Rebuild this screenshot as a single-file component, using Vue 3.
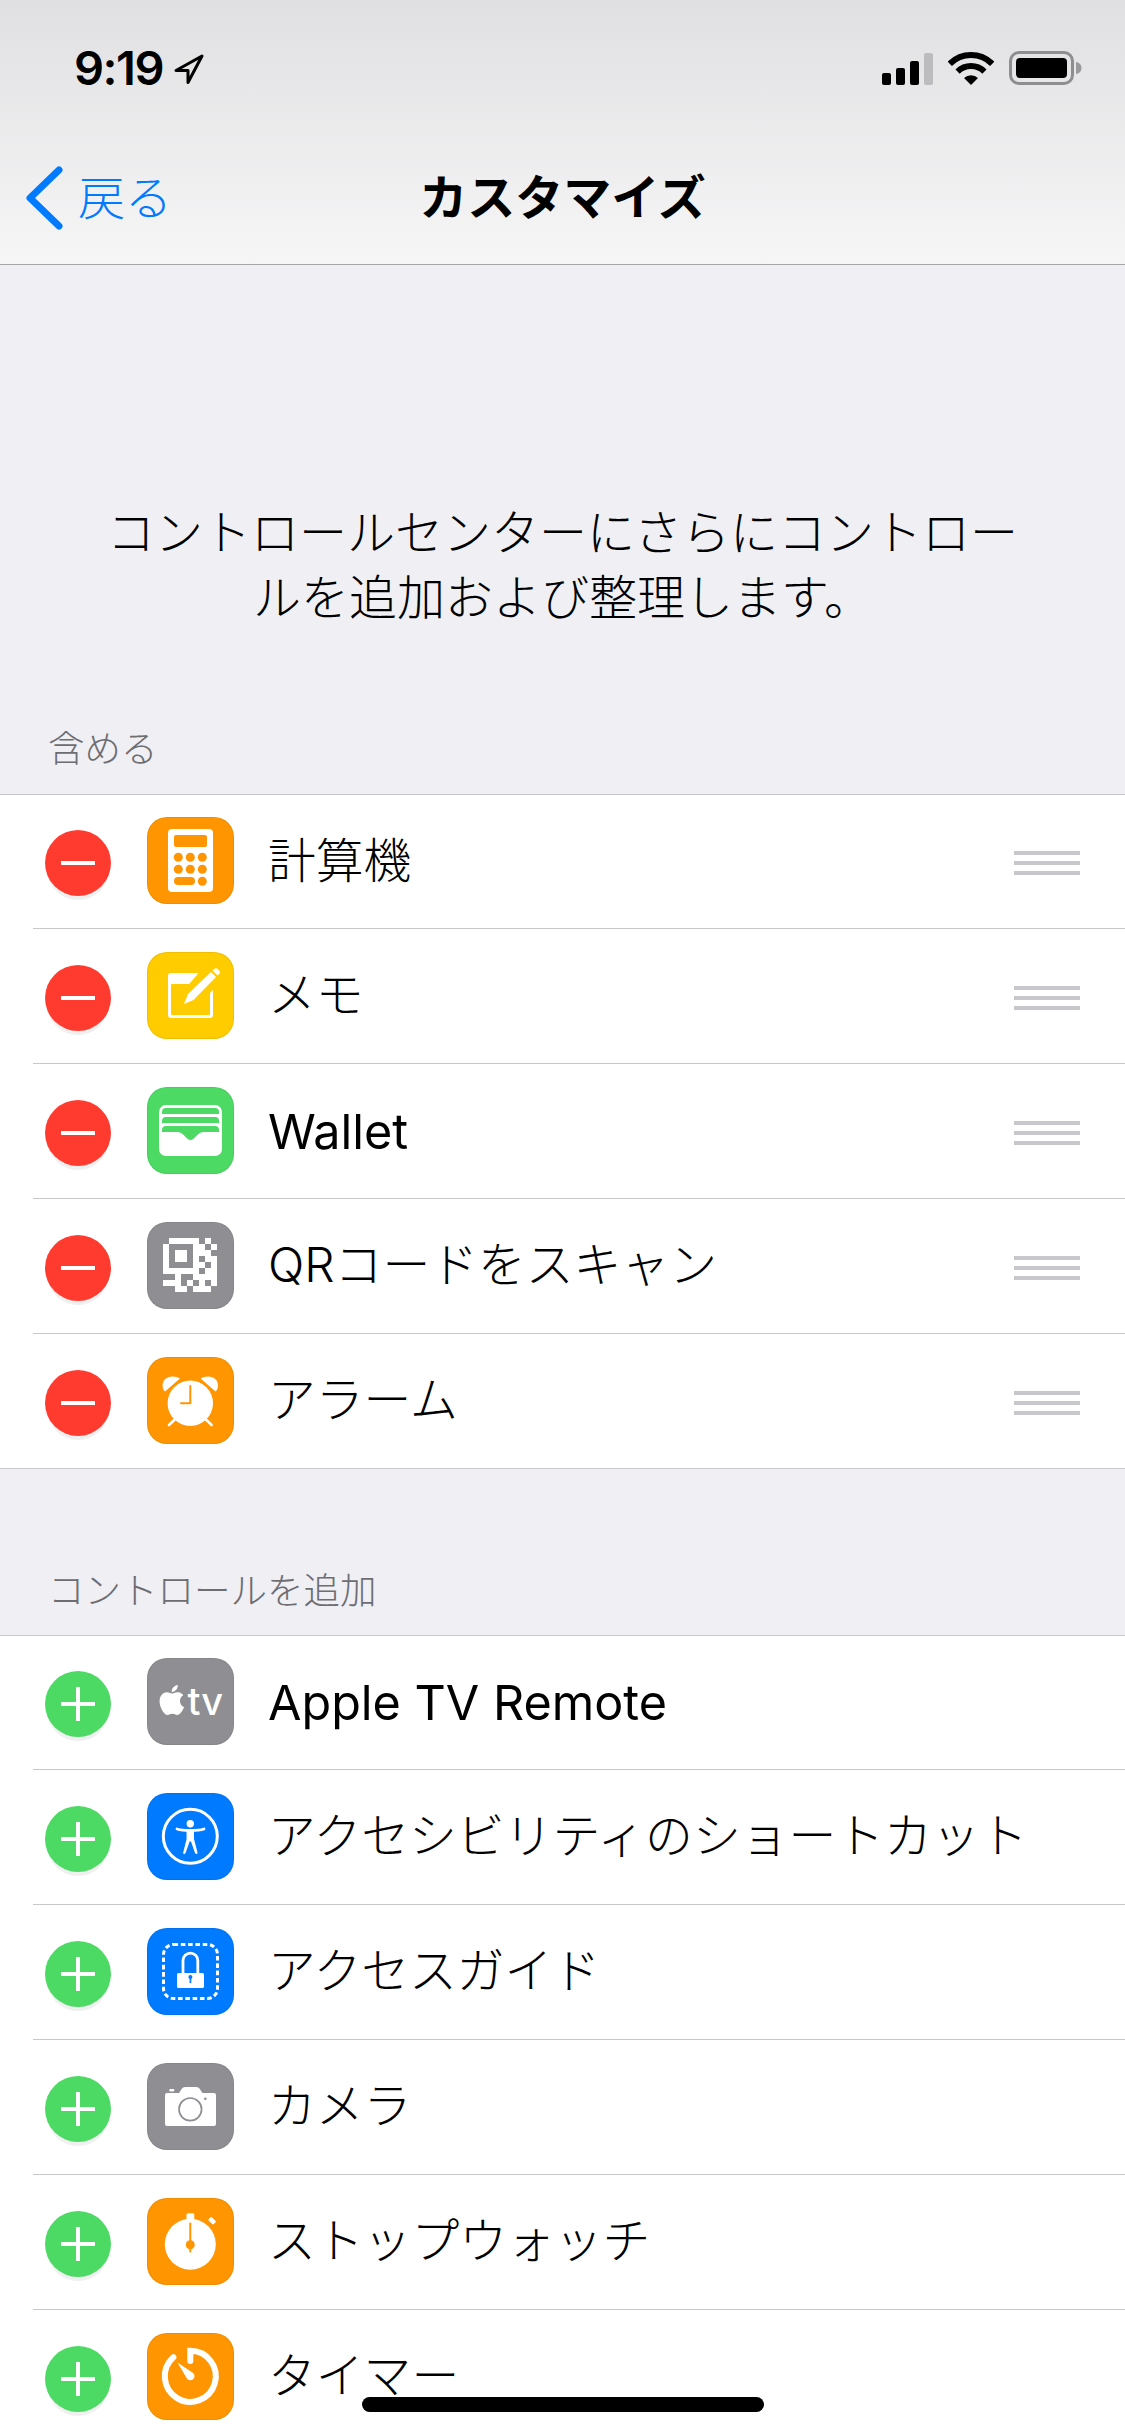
<template>
  <div class="screen">
    <header class="top-bar">
      <div class="status-bar">
        <div class="status-left">
          <span class="time">9:19</span>
          <svg class="location" width="32" height="32" viewBox="0 0 32 32">
            <path d="M29 3 L3 17.5 H15 V29.5 Z" fill="none" stroke="#000" stroke-width="3" stroke-linejoin="round" />
          </svg>
        </div>
        <div class="status-right">
          <svg width="51" height="32" viewBox="0 0 51 32">
            <rect x="0" y="20" width="9" height="12" rx="2" fill="#000" />
            <rect x="14" y="15" width="9" height="17" rx="2" fill="#000" />
            <rect x="28" y="8" width="9" height="24" rx="2" fill="#000" />
            <rect x="42" y="0" width="9" height="32" rx="2" fill="#bcbcbe" />
          </svg>
          <svg width="46" height="33" viewBox="0 0 46 33">
            <path d="M1.8 11.8 A30 30 0 0 1 44.2 11.8" fill="none" stroke="#000" stroke-width="6" />
            <path d="M9.6 19.6 A19 19 0 0 1 36.4 19.6" fill="none" stroke="#000" stroke-width="6" />
            <path d="M23 33 L16 26 A10 10 0 0 1 30 26 Z" fill="#000" />
          </svg>
          <svg width="74" height="34" viewBox="0 0 74 34">
            <rect x="1.5" y="1.5" width="62" height="31" rx="8.5" fill="none" stroke="#8e8e90" stroke-width="3" />
            <rect x="7" y="7" width="51" height="20" rx="4" fill="#000" />
            <path d="M67 11 C70.5 11.5 72.5 14 72.5 17 C72.5 20 70.5 22.5 67 23 Z" fill="#9a9a9c" />
          </svg>
        </div>
      </div>
      <nav class="nav-bar">
        <div class="back">
          <svg width="40" height="66" viewBox="0 0 40 66">
            <polyline points="33,5 4,33 33,61" fill="none" stroke="#007aff" stroke-width="7" stroke-linecap="round" stroke-linejoin="round" />
          </svg>
          <span class="back-text">戻る</span>
        </div>
        <div class="title">カスタマイズ</div>
        <div></div>
      </nav>
    </header>

    <p class="intro">コントロールセンターにさらにコントロールを追加および整理します。</p>

    <section v-for="section in sections" :key="section.title" class="section">
      <h2 class="section-title">{{ section.title }}</h2>
      <ul class="list">
        <li v-for="item in section.items" :key="item.label" class="row">
          <svg class="toggle" :class="section.add ? 'toggle-add' : 'toggle-remove'" width="66" height="66" viewBox="0 0 66 66">
            <rect x="16" y="31" width="34" height="4" fill="#fff" />
            <rect v-if="section.add" x="31" y="16" width="4" height="34" fill="#fff" />
          </svg>

          <div class="app-icon" :class="item.color">
            <svg width="87" height="87" viewBox="0 0 87 87">
              <g v-if="item.icon === 'calc'">
                <rect x="21" y="12" width="45" height="63" rx="4" fill="#fff" />
                <rect x="27" y="18" width="33" height="12" rx="2" fill="#ff9500" />
                <g fill="#ff9500">
                  <circle v-for="dot in calcDots" :key="dot[0] + '-' + dot[1]" :cx="dot[0]" :cy="dot[1]" r="4.5" />
                  <rect x="27" y="60" width="21" height="8" rx="4" />
                </g>
              </g>

              <g v-else-if="item.icon === 'memo'">
                <rect x="21" y="21" width="45" height="45" rx="3" fill="#fff" />
                <rect x="24" y="32" width="39" height="31" rx="1" fill="#ffcc00" />
                <path d="M56 16 L72 16 L72 32 L44 60 L30 60 L30 46 Z" fill="#ffcc00" />
                <path d="M37 52 L41 42 L64 20 L69 25 L46.5 48 Z" fill="#fff" />
                <path d="M65.5 18.5 L67.5 16.7 Q69 15.7 70.3 16.8 L72.5 19 Q73.5 20.4 72.4 21.7 L70.5 23.6 Z" fill="#fff" />
              </g>

              <g v-else-if="item.icon === 'wallet'">
                <rect x="12" y="18" width="63" height="51" rx="7" fill="#fff" />
                <g fill="#4cd964">
                  <path d="M15 27 V25 a4 4 0 0 1 4 -4 H68 a4 4 0 0 1 4 4 V27 Z" />
                  <path d="M15 36 V34 a4 4 0 0 1 4 -4 H68 a4 4 0 0 1 4 4 V36 Z" />
                  <path d="M15 45 V43 a4 4 0 0 1 4 -4 H68 a4 4 0 0 1 4 4 V45 H57 C50 45 48 53 43.5 53 C39 53 37 45 30 45 Z" />
                </g>
              </g>

              <g v-else-if="item.icon === 'qr'" fill="#fff" shape-rendering="crispEdges">
                <rect v-for="cell in qrCells" :key="cell.x + '-' + cell.y" :x="cell.x" :y="cell.y" width="6.1" height="6.1" />
              </g>

              <g v-else-if="item.icon === 'alarm'">
                <circle cx="43.3" cy="46.3" r="22.7" fill="#fff" />
                <path d="M43.3 29 V46.3 H34" fill="none" stroke="#ff9500" stroke-width="2" stroke-linecap="round" stroke-linejoin="round" />
                <path d="M33 21.5 L18 34.5 C15 32 15 27 17 23.5 C20 19 28 18 33 21.5 Z" fill="#fff" />
                <path d="M53.6 21.5 L68.6 34.5 C71.6 32 71.6 27 69.6 23.5 C66.6 19 58.6 18 53.6 21.5 Z" fill="#fff" />
                <path d="M22 68 L28 62.3 M64.6 68 L58.6 62.3" stroke="#fff" stroke-width="2.6" stroke-linecap="round" />
              </g>

              <g v-else-if="item.icon === 'tv'" fill="#fff">
                <path transform="translate(9.8 27) scale(1.25)" d="M12.152 6.896c-.948 0-2.415-1.078-3.96-1.04-2.04.027-3.91 1.183-4.961 3.014-2.117 3.675-.546 9.103 1.519 12.09 1.013 1.454 2.208 3.09 3.792 3.039 1.52-.065 2.09-.987 3.935-.987 1.831 0 2.35.987 3.96.948 1.637-.026 2.676-1.48 3.676-2.948 1.156-1.688 1.636-3.325 1.662-3.415-.039-.013-3.182-1.221-3.22-4.857-.026-3.04 2.48-4.494 2.597-4.559-1.429-2.09-3.623-2.324-4.39-2.376-2-.156-3.675 1.09-4.61 1.09zM15.53 3.83c.843-1.012 1.4-2.427 1.245-3.83-1.207.052-2.662.805-3.532 1.818-.78.896-1.454 2.338-1.273 3.714 1.338.104 2.715-.688 3.559-1.701" />
                <text x="40.5" y="57" font-family="Inter, sans-serif" font-size="38" font-weight="500">tv</text>
              </g>

              <g v-else-if="item.icon === 'access'">
                <circle cx="43.3" cy="43.3" r="27" fill="none" stroke="#fff" stroke-width="3" />
                <circle cx="43.3" cy="30.7" r="3.7" fill="#fff" />
                <path d="M30 36 C36 38 51 38 57 36" fill="none" stroke="#fff" stroke-width="2.8" stroke-linecap="round" />
                <path d="M39.5 37.5 L47 37.5 L47 46 L50.5 59.5 C50.5 61.5 48.5 61.5 48 60 L44 48.5 H42.6 L38.6 60 C38 61.5 36 61.5 36.2 59.5 L39.6 46 Z" fill="#fff" />
              </g>

              <g v-else-if="item.icon === 'guided'">
                <rect x="16.5" y="16.5" width="54" height="54" rx="10" fill="none" stroke="#fff" stroke-width="3" stroke-dasharray="4.6 2.7" />
                <path d="M36 46 V32.5 a7.4 7.4 0 0 1 14.8 0 V46" fill="none" stroke="#fff" stroke-width="2.8" />
                <rect x="30" y="45" width="27" height="15" rx="1.6" fill="#fff" />
                <circle cx="43.4" cy="49" r="2" fill="#007aff" />
                <rect x="42.6" y="49" width="1.7" height="6" fill="#007aff" />
              </g>

              <g v-else-if="item.icon === 'camera'">
                <path d="M20 30 H32 L35 25.5 Q36 24 38 24 H49.5 Q51.5 24 52.5 25.5 L55.5 30 H67 a2 2 0 0 1 2 2 V61 a2 2 0 0 1 -2 2 H20 a2 2 0 0 1 -2 -2 V32 a2 2 0 0 1 2 -2 Z" fill="#fff" />
                <rect x="22.3" y="26" width="5" height="2.6" rx="1" fill="#fff" />
                <circle cx="43.3" cy="46.3" r="11.3" fill="none" stroke="#8e8e93" stroke-width="1.7" />
                <circle cx="58.3" cy="35.7" r="1.3" fill="#8e8e93" />
              </g>

              <g v-else-if="item.icon === 'stopwatch'">
                <circle cx="43.3" cy="46.3" r="25.5" fill="#fff" />
                <rect x="39.5" y="15.3" width="7.8" height="9" rx="1.5" fill="#fff" />
                <rect x="61.5" y="20.4" width="7.2" height="4.6" rx="1.2" transform="rotate(45 65 22.7)" fill="#fff" />
                <path d="M43.3 25.5 V53.5" stroke="#ff9500" stroke-width="2" stroke-linecap="round" />
                <circle cx="43.3" cy="46.7" r="4.5" fill="#ff9500" />
              </g>

              <g v-else-if="item.icon === 'timer'">
                <path d="M43.3 28 V17.8 A25.5 25.5 0 1 1 26.4 24.2" fill="none" stroke="#fff" stroke-width="6" stroke-linecap="round" />
                <path d="M30.5 29.5 L46.4 40.3 A4.2 4.2 0 0 1 40.2 46 Z" fill="#fff" />
              </g>
            </svg>
          </div>

          <span class="label" :class="{ 'label-latin': item.latin }">{{ item.label }}</span>

          <div v-if="!section.add" class="grip">
            <i></i><i></i><i></i>
          </div>
        </li>
      </ul>
    </section>

    <div class="home-bar"></div>
  </div>
</template>

<script setup>
const sections = [
  {
    title: "含める",
    add: false,
    items: [
      { label: "計算機", icon: "calc", color: "orange" },
      { label: "メモ", icon: "memo", color: "yellow" },
      { label: "Wallet", icon: "wallet", color: "green", latin: true },
      { label: "QRコードをスキャン", icon: "qr", color: "gray" },
      { label: "アラーム", icon: "alarm", color: "orange" },
    ],
  },
  {
    title: "コントロールを追加",
    add: true,
    items: [
      { label: "Apple TV Remote", icon: "tv", color: "gray", latin: true },
      { label: "アクセシビリティのショートカット", icon: "access", color: "blue" },
      { label: "アクセスガイド", icon: "guided", color: "blue" },
      { label: "カメラ", icon: "camera", color: "gray" },
      { label: "ストップウォッチ", icon: "stopwatch", color: "orange" },
      { label: "タイマー", icon: "timer", color: "orange" },
    ],
  },
];

const calcDots = [
  [31.3, 40.3], [43.3, 40.3], [55.3, 40.3],
  [31.3, 52.3], [43.3, 52.3], [55.3, 52.3],
  [55.3, 64.3],
];

const qrRows = [
  "011111010",
  "100001101",
  "101101110",
  "101101011",
  "100001101",
  "111111011",
  "001001111",
  "111010101",
  "001101110",
];

const qrCells = [];
qrRows.forEach((row, y) => {
  [...row].forEach((cell, x) => {
    if (cell === "1") qrCells.push({ x: 16.3 + x * 6, y: 16.3 + y * 6 });
  });
});
</script>

<style>
html,
body {
  background: #efeff4;
}
</style>

<style scoped>
.screen {
  position: relative;
  width: 1125px;
  height: 2436px;
  overflow: hidden;
  background: #efeff4;
  font-family: "Inter", "Noto Sans CJK JP", sans-serif;
  color: #000;
}

.top-bar {
  height: 264px;
  border-bottom: 1px solid #a6a6a6;
  background: linear-gradient(#e0e0e2, #f6f6f7);
}

.status-bar {
  height: 132px;
  display: flex;
  justify-content: space-between;
  align-items: flex-start;
  padding: 51px 42px 0 74px;
  box-sizing: border-box;
}

.status-left {
  display: flex;
  align-items: center;
  gap: 10px;
  height: 35px;
}

.time {
  padding-bottom: 2px;
  font-size: 47px;
  font-weight: 600;
  letter-spacing: -1.5px;
  line-height: 33px;
}

.status-right {
  display: flex;
  align-items: flex-end;
  gap: 15px;
}

.nav-bar {
  height: 132px;
  display: grid;
  grid-template-columns: 1fr auto 1fr;
  align-items: center;
}

.back {
  display: flex;
  align-items: center;
  gap: 12px;
  padding-left: 26px;
  color: #007aff;
  font-size: 47px;
  font-weight: 300;
}

.back-text {
  padding-bottom: 7px;
}

.title {
  padding-bottom: 8px;
  font-size: 48px;
  font-weight: 700;
}

.intro {
  margin: 0;
  padding: 235px 100px 0;
  font-size: 48px;
  font-weight: 300;
  line-height: 65px;
  text-align: center;
}

.section-title {
  margin: 99px 0 25px 48px;
  font-size: 36.5px;
  line-height: 40px;
  font-weight: 300;
  color: #6d6d72;
}

.section + .section .section-title {
  margin-top: 102px;
  margin-bottom: 24px;
}

.list {
  margin: 0;
  padding: 0 0 0 33px;
  list-style: none;
  background: #fff;
  border-top: 1px solid #c8c7cc;
  border-bottom: 1px solid #c8c7cc;
}

.row {
  display: flex;
  align-items: center;
  height: 135px;
  box-sizing: border-box;
  padding-left: 12px;
  border-bottom: 1px solid #c8c7cc;
}

.row:first-child {
  height: 134px;
}

.row:last-child {
  border-bottom: none;
  height: 134px;
}

.toggle {
  flex-shrink: 0;
  margin-top: 3px;
  border-radius: 50%;
  box-shadow: 0 6px 0 -2px #f0f0f1;
}

.toggle-remove {
  background: #ff3b30;
}

.toggle-add {
  background: #4cd964;
}

.app-icon {
  flex-shrink: 0;
  width: 87px;
  height: 87px;
  margin-left: 36px;
  margin-bottom: 2px;
  border-radius: 20px;
  box-shadow: inset 0 0 0 1px rgba(0, 0, 0, 0.06);
}

.app-icon svg {
  display: block;
}

.orange {
  background: #ff9500;
}

.yellow {
  background: #ffcc00;
}

.green {
  background: #4cd964;
}

.gray {
  background: #8e8e93;
}

.blue {
  background: #007aff;
}

.label {
  flex: 1;
  margin-left: 34px;
  padding-bottom: 9px;
  font-size: 47.8px;
  font-weight: 300;
  white-space: nowrap;
}

.label-latin {
  padding-bottom: 0;
  font-size: 48.5px;
  font-weight: 400;
}

.grip {
  display: flex;
  flex-direction: column;
  gap: 6px;
  width: 66px;
  margin-right: 45px;
  margin-top: 3px;
}

.grip i {
  display: block;
  height: 4px;
  background: #c7c7cc;
}

.home-bar {
  position: absolute;
  left: 362px;
  bottom: 24px;
  width: 402px;
  height: 15px;
  border-radius: 8px;
  background: #000;
}
</style>
